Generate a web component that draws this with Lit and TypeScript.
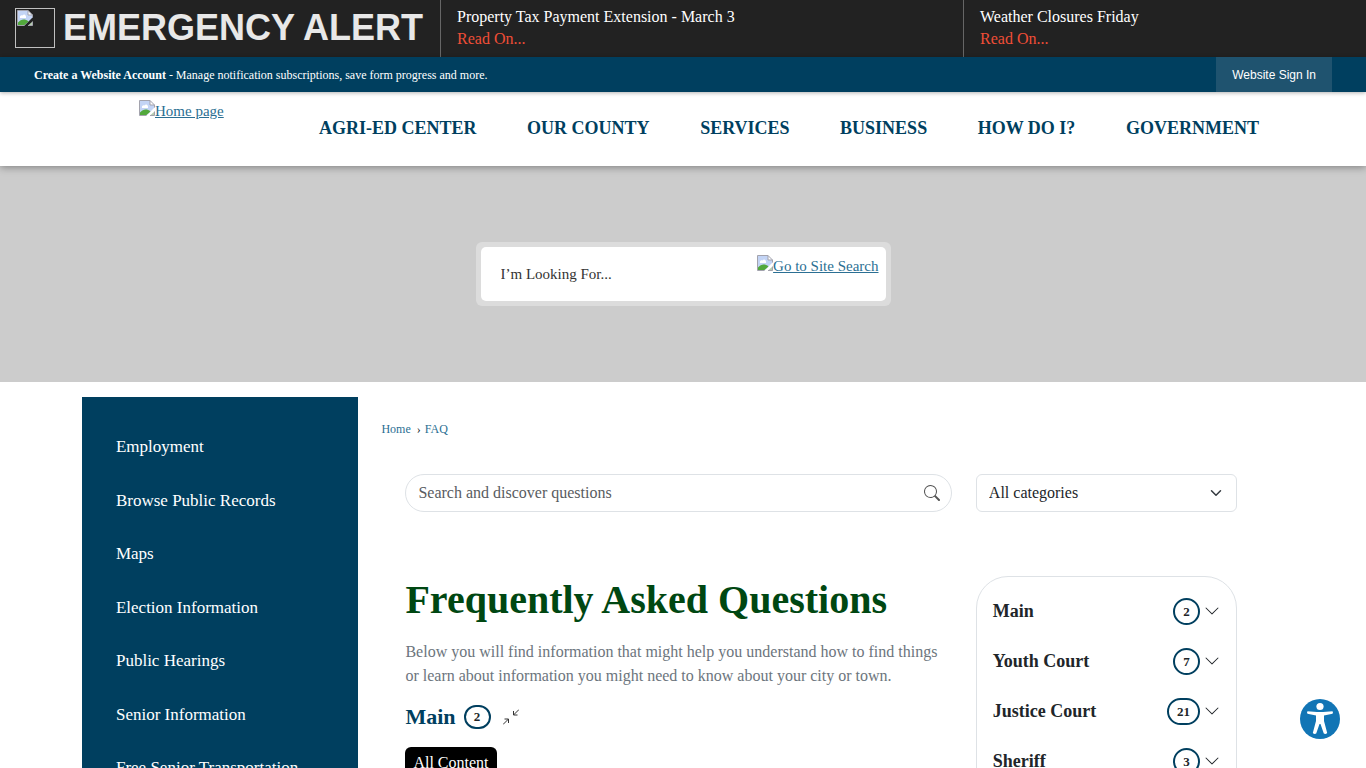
import { LitElement, html, css, svg } from "lit";
import { customElement } from "lit/decorators.js";

const brokenImage = svg`
  <path d="M.5 .5H11L15.500 5V7.500L7.500 15.500H.5Z" fill="#c3d4f5"/>
  <path d="M3 8C2.500 6 4 5 5.500 5.500C7 3.500 9.500 5 9 8Z" fill="#fff"/>
  <path d="M1 15V12.500C4 9 8 8.500 11.500 11.500L7.500 15Z" fill="#52a83c"/>
  <path d="M11 15.500L15.500 11.500V15.500Z" fill="#b5cdb0"/>
  <path d="M11 .5V5H15.500Z" fill="#fff"/>
  <path d="M7.500 15.500H.5V.5H11L15.500 5V7.500M11 .5V5H15.500M11 15.500H15.500V11.500" fill="none" stroke="#a3a3ad"/>`;

const brokenIcon = html`<svg class="broken" viewBox="0 0 16 16" aria-hidden="true">${brokenImage}</svg>`;

const chevron = html`<svg class="chevron" viewBox="0 0 16 16" aria-hidden="true">
  <path d="M1.646 4.646a.5.5 0 0 1 .708 0L8 10.293l5.646-5.647a.5.5 0 0 1 .708.708l-6 6a.5.5 0 0 1-.708 0l-6-6a.5.5 0 0 1 0-.708z" fill="#212529"/>
</svg>`;

@customElement("app-root")
export class AppRoot extends LitElement {
  static styles = css`
    :host {
      display: block;
      height: 100vh;
      overflow: hidden;
      background: #fff;
      color: #212529;
      font: 16px/1.5 "Liberation Serif", serif;
    }
    * { box-sizing: border-box; }
    a { color: #2b6f93; }
    ul, ol { list-style: none; margin: 0; padding: 0; }
    h1, h2, p { margin: 0; }
    button, input, select { font: inherit; color: inherit; }
    .broken { width: 16px; height: 16px; flex: none; }

    .alert {
      display: grid;
      grid-template-columns: 440px 1fr 403px;
      height: 57px;
      background: #222;
      color: #fff;
    }
    .alert-title {
      display: flex;
      align-items: center;
      gap: 8px;
      height: 56px;
      padding-left: 15px;
      color: #e8e8e8;
      font: bold 36px/56px "Liberation Sans", sans-serif;
      white-space: nowrap;
    }
    .alert-image {
      flex: none;
      width: 40px;
      height: 40px;
      padding: 1px;
      border: 1px solid #c0c0c0;
      display: flex;
    }
    .alert-item {
      border-left: 1px solid #666;
      padding: 6px 16px;
      line-height: 22px;
    }
    .alert-item a { display: block; color: #f04e37; text-decoration: none; }

    .account {
      display: flex;
      align-items: stretch;
      justify-content: space-between;
      height: 35px;
      padding: 0 34px;
      background: #003f5f;
      color: #fff;
      font-size: 12px;
      line-height: 36px;
      box-shadow: 0 1px 4px rgba(0, 0, 0, 0.3);
      position: relative;
      z-index: 2;
    }
    .account a { color: #fff; text-decoration: none; font-weight: bold; }
    .sign-in {
      border: 0;
      padding: 0 16px;
      background: #1f536f;
      font: 12px/36px "Liberation Sans", sans-serif;
      color: #fff;
    }

    .header {
      display: flex;
      align-items: flex-start;
      height: 74px;
      padding: 0 107px 0 139px;
      background: #fff;
      box-shadow: 0 1px 8px rgba(0, 0, 0, 0.4);
      position: relative;
      z-index: 1;
    }
    .logo, .go {
      display: flex;
      align-items: flex-start;
      font-size: 15px;
      line-height: 22px;
      white-space: nowrap;
    }
    .logo { width: 180px; padding-top: 8px; }
    .nav { flex: 1; }
    .nav ul { display: flex; justify-content: space-between; }
    .nav a {
      color: #003f5f;
      font-size: 18px;
      font-weight: bold;
      line-height: 72px;
      text-decoration: none;
      white-space: nowrap;
    }

    .banner {
      display: flex;
      justify-content: center;
      align-items: center;
      height: 216px;
      background: #ccc;
    }
    .site-search {
      display: flex;
      width: 415px;
      height: 64px;
      padding: 5px;
      border-radius: 6px;
      background: #dcdcdc;
    }
    .field {
      display: flex;
      flex: 1;
      border-radius: 5px;
      background: #fff;
    }
    .site-search input {
      flex: 1;
      min-width: 0;
      border: 0;
      padding: 0 20px;
      background: none;
      font-size: 15px;
    }
    input::placeholder { color: #333; opacity: 1; }
    .go { padding: 8px 7px 0 0; }

    .page {
      display: grid;
      grid-template-columns: 23% minmax(0, 1fr);
      padding: 15px 6% 0;
    }
    .side { min-height: 600px; padding: 37px 34px; background: #003f5f; }
    .side a {
      display: block;
      padding: 14px 0;
      font-size: 17px;
      line-height: 1.5;
      color: #fff;
      text-decoration: none;
    }
    .side li:first-child a { padding-top: 0; }
    .main { padding: 22px 23px 0 23px; }
    .crumbs { display: flex; gap: 4px; font-size: 12px; line-height: 20px; }
    .crumbs a { text-decoration: none; }
    .crumbs a:first-child { padding-right: 2px; }
    .faq {
      display: grid;
      grid-template-columns: minmax(0, 2fr) minmax(0, 1fr);
      padding: 35px 12px 0;
      row-gap: 64px;
    }
    .cell { padding: 0 12px; }
    .search {
      display: flex;
      align-items: center;
      height: 38px;
      padding: 0 11px 0 12px;
      border: 1px solid #dee2e6;
      border-radius: 20px;
    }
    .search input { flex: 1; min-width: 0; padding: 0; border: 0; outline: 0; background: none; }
    .search input::placeholder { color: #595c5f; }
    .search button { display: flex; padding: 0; border: 0; background: none; }
    .search svg { width: 16px; height: 16px; }
    .select { display: grid; align-items: center; }
    .select select, .select svg { grid-area: 1 / 1; }
    .select select {
      appearance: none;
      width: 100%;
      height: 38px;
      padding: 0 12px;
      border: 1px solid #dee2e6;
      border-radius: 6px;
      background: #fff;
    }
    .select svg {
      width: 16px;
      height: 12px;
      justify-self: end;
      margin-right: 13px;
      pointer-events: none;
    }
    h1 { color: #004712; font-size: 40px; line-height: 48px; }
    .intro { margin-top: 16px; color: #6c757d; }
    .group { display: flex; align-items: center; margin-top: 16px; }
    h2 { color: #003f5f; font-size: 22px; line-height: 26px; }
    .badge {
      display: inline-block;
      min-width: 27px;
      border: 2px solid #003f5f;
      border-radius: 14px;
      padding: 0 8px;
      color: #212529;
      font-size: 13px;
      font-weight: bold;
      line-height: 23px;
      text-align: center;
    }
    .group .badge { margin: 0 12px 0 8px; line-height: 20px; }
    .collapse { display: flex; border: 0; padding: 0; background: none; }
    .collapse svg { width: 16px; height: 16px; }
    .pill {
      display: block;
      margin-top: 17px;
      padding: 4px 8px;
      border: 0;
      border-radius: 6px;
      background: #000;
      color: #fff;
    }
    .card {
      min-height: 320px;
      padding: 9px 16px;
      border: 1px solid #dee2e6;
      border-radius: 32px;
    }
    .card button {
      display: flex;
      align-items: center;
      width: 100%;
      height: 50px;
      padding: 0;
      border: 0;
      background: none;
      font-size: 18px;
      font-weight: bold;
      text-align: left;
    }
    .name { flex: 1; }
    .chevron { width: 16px; height: 16px; margin-left: 4px; }
    .access {
      position: fixed;
      right: 26px;
      bottom: 29px;
      display: flex;
      padding: 0;
      border: 0;
      background: none;
    }
    .access svg { width: 40px; height: 40px; }
  `;

  private alerts = ["Property Tax Payment Extension - March 3", "Weather Closures Friday"];
  private nav = ["AGRI-ED CENTER", "OUR COUNTY", "SERVICES", "BUSINESS", "HOW DO I?", "GOVERNMENT"];
  private links = [
    "Employment", "Browse Public Records", "Maps", "Election Information",
    "Public Hearings", "Senior Information", "Free Senior Transportation",
  ];
  private categories: [string, number][] = [["Main", 2], ["Youth Court", 7], ["Justice Court", 21], ["Sheriff", 3]];

  render() {
    return html`
      <section class="alert">
        <div class="alert-title"><span class="alert-image">${brokenIcon}</span>EMERGENCY ALERT</div>
        ${this.alerts.map((a) => html`<div class="alert-item">${a}<a href="#">Read On...</a></div>`)}
      </section>
      <div class="account">
        <span><a href="#">Create a Website Account</a> - Manage notification subscriptions, save form progress and more.</span>
        <button class="sign-in">Website Sign In</button>
      </div>
      <header class="header">
        <a class="logo" href="#">${brokenIcon}<span>Home page</span></a>
        <nav class="nav"><ul>${this.nav.map((n) => html`<li><a href="#">${n}</a></li>`)}</ul></nav>
      </header>
      <section class="banner">
        <form class="site-search">
          <div class="field">
            <input type="text" aria-label="Site search" placeholder="I’m Looking For..." />
            <a class="go" href="#">${brokenIcon}<span>Go to Site Search</span></a>
          </div>
        </form>
      </section>
      <div class="page">
        <nav class="side"><ul>${this.links.map((l) => html`<li><a href="#">${l}</a></li>`)}</ul></nav>
        <main class="main">
          <nav class="crumbs"><a href="#">Home</a> <span>›</span><a href="#">FAQ</a></nav>
          <div class="faq">
            <div class="cell">
              <div class="search">
                <input type="text" aria-label="Search questions" placeholder="Search and discover questions" />
                <button aria-label="Search">
                  <svg viewBox="0 0 16 16"><path fill="#555" d="M11.742 10.344a6.500 6.500 0 1 0-1.397 1.398h-.001q.044.060.098.115l3.850 3.850a1 1 0 0 0 1.415-1.414l-3.850-3.850a1 1 0 0 0-.115-.1zM12 6.500a5.500 5.500 0 1 1-11 0 5.500 5.500 0 0 1 11 0"/></svg>
                </button>
              </div>
            </div>
            <div class="cell">
              <div class="select">
                <select aria-label="Category"><option>All categories</option></select>
                <svg viewBox="0 0 16 16" aria-hidden="true"><path d="m2 5 6 6 6-6" fill="none" stroke="#343a40" stroke-width="2" stroke-linecap="round" stroke-linejoin="round"/></svg>
              </div>
            </div>
            <section class="cell">
              <h1>Frequently Asked Questions</h1>
              <p class="intro">Below you will find information that might help you understand how to find things or learn about information you might need to know about your city or town.</p>
              <div class="group">
                <h2>Main</h2><span class="badge">2</span>
                <button class="collapse" aria-label="Collapse">
                  <svg viewBox="0 0 16 16"><path d="M0 15.500 5.500 10M1.500 10h4v4M16 .5 10.500 6M10.500 2v4h4" fill="none" stroke="#333"/></svg>
                </button>
              </div>
              <button class="pill">All Content</button>
            </section>
            <aside class="cell">
              <div class="card">
                ${this.categories.map(([n, c]) => html`<button><span class="name">${n}</span><span class="badge">${c}</span>${chevron}</button>`)}
              </div>
            </aside>
          </div>
        </main>
      </div>
      <button class="access" aria-label="Accessibility options">
        <svg viewBox="0 0 40 40">
          <circle cx="20" cy="20" r="20" fill="#1275b5"/>
          <circle cx="20" cy="7.500" r="3.600" fill="#fff"/>
          <path d="M7.500 12.200 17 13h6l9.500-.8q1 1.400 0 2.600L24 16.500v5.500l3.200 12q-1.600 1.800-3.400.6L20.500 25h-1l-3.300 9.600q-1.800 1.200-3.400-.6L16 22v-5.500l-8.500-1.700q-1-1.200 0-2.600z" fill="#fff"/>
        </svg>
      </button>
    `;
  }
}
